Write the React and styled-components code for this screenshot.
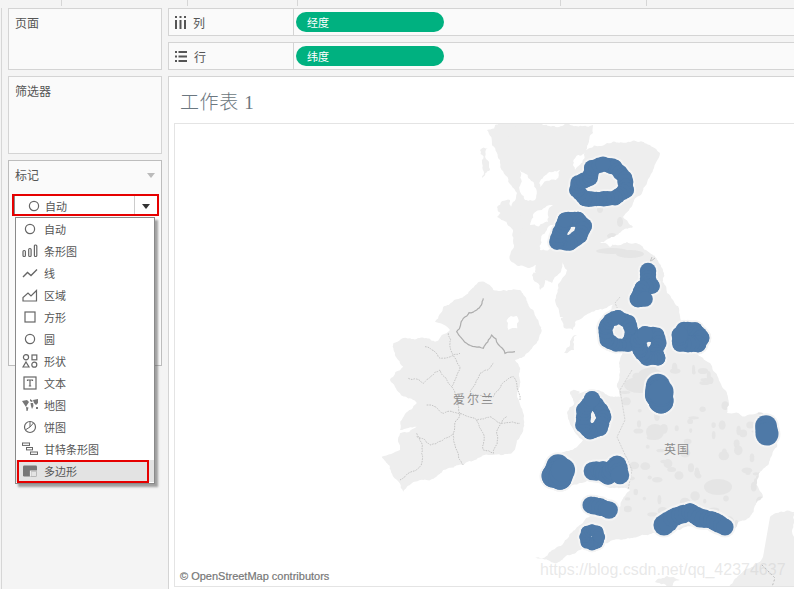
import React from 'react';
import styled, { createGlobalStyle } from 'styled-components';

const Global = createGlobalStyle`
  html, body { margin: 0; padding: 0; background: #f4f4f4; overflow: hidden; }
  body { font-family: "Noto Sans CJK SC", "Liberation Sans", sans-serif; color: #555; }
`;
const Page = styled.div`
  position: relative; width: 794px; height: 589px; overflow: hidden;
  display: flex; flex-direction: column;
`;
const TopStrip = styled.div`display: flex; height: 6px; flex: none;`;
const Tick = styled.div`
  flex: none; width: ${p => p.$w}px; box-sizing: border-box; border-right: 1px solid #d6d6d6;
`;
const Body = styled.div`display: flex; flex: 1; min-height: 0; padding-top: 2px;`;
const EdgeStrip = styled.div`
  flex: none; width: 2px; margin-right: 6px; box-sizing: border-box; border-right: 1px solid #d6d6d6;
`;
const Sidebar = styled.div`
  position: relative; flex: none; width: 154px; display: flex; flex-direction: column; gap: 6px;
`;
const Panel = styled.section`
  box-sizing: border-box; height: ${p => p.$h}px; background: #fafafa;
  border: 1px solid ${p => p.$active ? '#bdbdbd' : '#d4d4d4'};
  position: relative;
`;
const PanelTitle = styled.div`
  height: 28px; display: flex; align-items: center; justify-content: space-between;
  padding: 0 6px; font-size: 12px; line-height: 1; color: #555;
`;
const Caret = styled.span`
  width: 0; height: 0; border-left: 4px solid transparent; border-right: 4px solid transparent;
  border-top: 5px solid ${p => p.$dark ? '#333' : '#bbb'};
`;
const RedSelect = styled.div`
  box-sizing: border-box; margin: 5px 2px 0 3px; height: 22px; border: 2px solid #e60000;
  background: #fff; display: flex;
`;
const SelectValue = styled.div`
  flex: 1; display: flex; align-items: center; gap: 3px; padding: 2px 0 0 11px;
  font-size: 11px; color: #555; border-left: 1px solid #888;
`;
const SelectArrow = styled.div`
  flex: none; width: 22px; padding-top: 2px; border-left: 1px solid #ccc; display: flex; align-items: center; justify-content: center;
`;
const Menu = styled.ul`
  position: absolute; left: 7px; top: 209px; width: 140px; margin: 0; padding: 0; list-style: none;
  box-sizing: border-box; height: 267px; background: #fff; border: 1px solid #8a8a8a;
  box-shadow: 3px 3px 2px rgba(90,90,90,.55); z-index: 3;
`;
const MenuRow = styled.li`
  position: relative; height: 22px; display: flex; align-items: center; font-size: 11px; color: #555;
  background: ${p => p.$on ? '#e3e3e3' : 'transparent'};
  &::after {
    content: ${p => p.$on ? '""' : 'none'};
    position: absolute; left: 1px; right: 5px; top: 0; bottom: -1px; border: 2px solid #e60000;
  }
`;
const MenuIcon = styled.span`flex: none; width: 28px; display: flex; justify-content: center;`;
const Main = styled.div`
  flex: 1; min-width: 0; margin-left: 6px; display: flex; flex-direction: column; gap: 6px;
`;
const Shelf = styled.div`
  box-sizing: border-box; height: 28px; flex: none; display: flex; align-items: center; background: #fafafa;
  border-top: 1px solid #d4d4d4; border-bottom: 1px solid #d4d4d4; border-left: 1px solid #d4d4d4;
`;
const ShelfLabel = styled.div`
  box-sizing: border-box; flex: none; width: 125px; height: 100%; padding-left: 6px; display: flex;
  align-items: center; gap: 7px; border-right: 1px solid #d4d4d4; font-size: 12px; color: #555;
`;
const Pill = styled.div`
  margin-left: 2px; width: 148px; height: 20px; box-sizing: border-box; padding-left: 11px; border-radius: 10px;
  background: #00b180; color: #fff; font-size: 11px; display: flex; align-items: center;
`;
const Sheet = styled.div`
  flex: 1; min-height: 0; background: #fff; border-top: 1px solid #d4d4d4; border-left: 1px solid #d4d4d4;
  display: flex; flex-direction: column;
`;
const SheetTitle = styled.h1`
  flex: none; height: 46px; box-sizing: border-box; margin: 0; padding: 4px 0 0 11px; display: flex; align-items: center;
  font: 300 19px/1 "Liberation Serif", "Noto Sans CJK SC", serif; color: #6b7780; letter-spacing: .6px;
`;
const MapFrame = styled.div`
  position: relative; flex: 1; min-height: 0; margin: 0 0 2px 5px; overflow: hidden; background: #fff;
  border-top: 1px solid #e4e4e4; border-left: 1px solid #e4e4e4; border-bottom: 1px solid #e4e4e4;
`;
const MapSvg = styled.svg`display: block;`;
const Credit = styled.div`
  position: absolute; left: 5px; bottom: 3px; font: 11px/13px "Liberation Sans", sans-serif;
  color: #777; -webkit-text-stroke: .2px #777;
`;
const Watermark = styled.div`
  position: absolute; left: 365px; bottom: 6px; font: 16px/20px "Liberation Sans", sans-serif;
  color: rgba(205,205,205,.45); white-space: nowrap;
`;

const S = { fill: 'none', stroke: '#666', strokeWidth: 1.2 };
const Ic = ({ children, w = 16, h = 14 }) => <svg width={w} height={h} viewBox="0 0 16 14">{children}</svg>;
const icons = {
  circle: <Ic><circle cx="8" cy="7" r="4.6" {...S} /></Ic>,
  bars: <Ic><rect x="1" y="6.5" width="2.4" height="6" rx="1" {...S} /><rect x="6.7" y="4.5" width="2.4" height="8" rx="1" {...S} /><rect x="12.4" y="1" width="2.4" height="11.5" rx="1" {...S} /></Ic>,
  line: <Ic><path d="M1 11 L5.5 6.5 L9 9.5 L15 3.5" {...S} strokeWidth="1.4" /></Ic>,
  area: <Ic><path d="M1 13 V9.5 L6 5 L9 8 L14.5 2.5 V13 Z" {...S} /></Ic>,
  square: <Ic><rect x="3" y="2" width="10" height="10" {...S} /></Ic>,
  shape: <Ic><circle cx="4" cy="3.3" r="2.6" {...S} /><rect x="10" y="1" width="4.8" height="4.8" {...S} /><path d="M4 8 L7 13 H1 Z" {...S} /><circle cx="12.3" cy="10.7" r="2.5" {...S} /></Ic>,
  text: <Ic><rect x="2" y="1" width="12" height="12" {...S} /><path d="M5.5 5 V4 H10.5 V5 M8 4 V10 M6.8 10 H9.2" {...S} /></Ic>,
  map: <Ic w={20}><g fill="#777"><path d="M0 3 L5 2 L7 4 L5 7 L4 9 L2 6 Z" /><path d="M4 9 L6.5 9.5 L5.5 13 L4.5 13 Z" /><path d="M8 1 L11 3 L9.5 4 L8 3 Z" /><path d="M8.5 5 L11 5 L11.5 8 L10 11 L9 8 Z" /><path d="M11 2 L16 1 L16 5 L14 7 L12 5 Z" /><path d="M14 9 L16 9 L16 11 L14 11 Z" /></g></Ic>,
  pie: <Ic><circle cx="8" cy="7" r="5.5" {...S} /><path d="M8 7 V1.5 M8 7 L3.5 9.8 M8 7 L11.5 3" {...S} strokeWidth="1" /></Ic>,
  gantt: <Ic><rect x="0.5" y="1" width="7" height="2.4" {...S} strokeWidth="1" /><rect x="4.5" y="5.5" width="6" height="2.4" {...S} strokeWidth="1" /><rect x="8.5" y="10" width="7" height="2.4" {...S} strokeWidth="1" /></Ic>,
  polygon: <Ic w={18}><rect x="1" y="1.5" width="14" height="11" rx="1.2" fill="#777" /><path d="M8.5 12.5 V7 H15" fill="none" stroke="#eee" strokeWidth="1.2" /><rect x="9.2" y="7.6" width="5.4" height="4.6" fill="#e3e3e3" /></Ic>,
};
const items = [
  ['circle', '自动'], ['bars', '条形图'], ['line', '线'], ['area', '区域'], ['square', '方形'], ['circle', '圆'],
  ['shape', '形状'], ['text', '文本'], ['map', '地图'], ['pie', '饼图'], ['gantt', '甘特条形图'], ['polygon', '多边形'],
];

/* seeded random + fractal coastline generator for the map drawing */
const rng = seed => { let s = seed; return () => { s = (s * 16807) % 2147483647; return (s - 1) / 2147483646; }; };
const pts = str => { const n = str.match(/-?[\d.]+/g).map(Number); const o = []; for (let i = 0; i < n.length; i += 2) o.push([n[i], n[i + 1]]); return o; };
const z5 = a => a.map(([x, y]) => [380 + x / 3, 280 + y / 3]);
const rough = (arr, seed, closed = true, k = 0.2, min = 2.5) => {
  const r = rng(seed);
  const seg = (a, b) => {
    const dx = b[0] - a[0], dy = b[1] - a[1], l = Math.hypot(dx, dy);
    if (l < min) return [b];
    const d = (r() - 0.5) * l * k * 2;
    const m = [(a[0] + b[0]) / 2 - dy / l * d, (a[1] + b[1]) / 2 + dx / l * d];
    return [...seg(a, m), ...seg(m, b)];
  };
  const out = [arr[0]];
  const list = closed ? [...arr, arr[0]] : arr;
  for (let i = 1; i < list.length; i++) out.push(...seg(list[i - 1], list[i]));
  return 'M' + out.map(p => p[0].toFixed(1) + ' ' + p[1].toFixed(1)).join('L') + (closed ? 'Z' : '');
};

const GB = rough(pts('500 125 543 125 593 125 593 133 583 153 607 143 650 145 660 153 653 170 647 183 633 203 623 217 633 227 613 237 600 243 627 242 650 253 663 270 667 293 673 300 680 330 710 363 727 393 727 413 763 413 777 423 777 447 770 460 757 480 763 497 750 517 730 533 680 530 637 537 613 540 580 550 557 563 535 558 557 547 577 527 593 513 620 507 630 490 607 487 580 483 557 490 543 477 557 457 577 447 583 440 567 413 577 393 597 390 620 397 617 387 620 360 622 345 600 330 613 303 620 297 590 313 575 322 560 317 555 300 567 270 562 262 552 283 535 272 545 255 528 268 510 260 513 230 497 217 517 193 500 160 487 130'), 11, true, 0.14);
const IE = rough(z5(pts('300 5 340 30 420 30 460 90 485 150 470 190 440 220 405 240 420 300 430 400 420 470 395 520 330 525 250 555 190 570 130 600 70 635 40 590 5 530 60 510 60 460 110 440 60 450 110 370 60 340 30 300 70 260 40 190 90 175 165 185 210 150 165 125 190 80 250 50')), 23, true, 0.14);
const FR = rough(pts('770 517 794 512 794 590 723 590 745 570 763 557'), 31, false, 0.12);
const isles = [
  '480 150 488 148 490 170 482 178', '495 125 515 125 502 140 492 135', '512 222 520 215 522 232 514 238',
  '497 207 510 200 514 210 504 216', '532 275 548 265 550 275 540 290', '561 318 575 322 573 330 564 328',
  '570 345 577 335 574 350 564 353', '570 392 580 392 575 405', '655 582 680 580 670 590',
].map((s, i) => rough(pts(s), 41 + i, true, 0.2));
const inlets = [
  '540 187 560 170 556 180', '573 165 585 152 575 170', '520 170 535 200 525 200', '530 225 553 205 548 222',
  '540 250 555 225 552 248', '603 243 622 241 610 247',
].map((s, i) => rough(pts(s), 61 + i, true, 0.2));
const lake = rough(z5(pts('380 120 410 108 412 145 385 150')), 71, true, 0.2);

const patchRand = rng(97);
const patches = [];
for (let i = 0; i < 110; i++) {
  patches.push([620 + patchRand() * 155, 365 + patchRand() * 170, 1.5 + patchRand() * 4, 1.5 + patchRand() * 3.5]);
}
[[640, 385, 16, 8], [650, 375, 12, 7], [655, 432, 9, 8], [718, 487, 14, 8], [706, 352, 5, 4], [612, 251, 16, 3], [630, 254, 14, 4], [620, 222, 3, 5], [612, 236, 5, 3], [600, 209, 3, 4], [648, 224, 3, 3]].forEach(p => patches.push(p));

const borders = [
  ['310 55 290 90 250 115 230 155 260 190 310 205 335 165 375 220 405 215', 3.6, '#adadad', 'none'],
  ['205 160 210 200 240 260 215 320 240 400 220 460 230 510 250 555', 3, '#c4c4c4', '5 3'],
  ['85 295 130 310 180 270 215 320', 3, '#c4c4c4', '5 3'],
  ['140 375 190 400 240 400 290 420 330 410 420 430', 3, '#c4c4c4', '5 3'],
  ['135 200 180 235 240 220', 3, '#c4c4c4', '5 3'],
  ['340 250 300 280 270 340 340 350 400 290 420 360', 3, '#c4c4c4', '5 3'],
  ['110 460 125 520 120 560 60 600', 3, '#c4c4c4', '5 3'],
  ['110 470 150 495 220 460', 3, '#c4c4c4', '5 3'],
  ['290 420 310 510 340 520 380 410', 3, '#c4c4c4', '5 3'],
].map(([s, w, c, d], i) => ({ d: rough(pts(s), 81 + i, false, 0.12, 10), w, c, dash: d }));

const blobDefs = [
  { p: '603 164 615 167 625 178 626 190 615 198 600 199 585 199 577 190 578 183 590 178 592 168', r: 7.5, closed: true },
  { p: '565 220 578 219 584 226 580 236 570 243 557 242 560 232 563 226', r: 7.5, closed: true },
  { p: '648 271 648 282 652 286 642 288 638 299 645 299', r: 8 },
  { p: '618 317 629 322 632 333 628 345 616 345 607 340 605 328 610 320', r: 7, closed: true },
  { p: '645 334 657 335 659 343 655 352 658 358 647 358 640 350 638 340', r: 7.5, closed: true },
  { p: '680 335 684 330 695 330 701 338 698 344 688 344 680 344', r: 8, closed: true },
  { p: '658 386 657 395 661 401 661 392', r: 12 },
  { p: '592 399 601 410 604 417 600 428 590 432 583 425 584 410', r: 7.5, closed: true },
  { p: '558 466 553 476 560 478 563 470', r: 11.5 },
  { p: '593 471 603 471 608 475 617 465 620 475', r: 9.5 },
  { p: '591 505 600 507 609 510', r: 8.5 },
  { p: '599 537 597 542 592 544 587 542 585 537 587 532 592 530 597 532', r: 6, closed: true },
  { p: '664 525 668 522', r: 10.5 },
  { p: '672 518 680 515 690 512 700 518 712 520 725 527', r: 9 },
  { p: '766 426 767 434', r: 11 },
];
const blobRand = rng(1234);
const circles = [];
blobDefs.forEach(b => {
  const a = pts(b.p);
  const list = b.closed ? [...a, a[0]] : a;
  for (let i = 1; i < list.length; i++) {
    const [x0, y0] = list[i - 1], [x1, y1] = list[i];
    const n = Math.max(1, Math.round(Math.hypot(x1 - x0, y1 - y0) / 3.5));
    for (let j = 0; j <= n; j++) {
      circles.push([x0 + (x1 - x0) * j / n, y0 + (y1 - y0) * j / n, b.r - 0.6 + blobRand() * 1.2]);
    }
  }
});

const MapDrawing = () => (
  <MapSvg width="619" height="462" viewBox="175 124 619 462">
    <defs>
      <clipPath id="gb"><path d={GB} /></clipPath>
      <filter id="soft" x="0" y="0" width="100%" height="100%"><feGaussianBlur stdDeviation=".35" /></filter>
    </defs>
    <g filter="url(#soft)">
      <g fill="#eeeeee">
        <path d={GB} /><path d={IE} /><path d={FR} />
        {isles.map((d, i) => <path key={i} d={d} />)}
      </g>
      <g fill="#fff">
        {inlets.map((d, i) => <path key={i} d={d} />)}
        <path d={lake} />
      </g>
      <g fill="#e5e5e5" clipPath="url(#gb)">
        {patches.map(([x, y, a, b], i) => <ellipse key={i} cx={x} cy={y} rx={a} ry={b} />)}
      </g>
      <g fill="none" transform="translate(380 280) scale(.3333)">
        {borders.map((b, i) => <path key={i} d={b.d} stroke={b.c} strokeWidth={b.w} strokeDasharray={b.dash} />)}
      </g>
      <path d="M620 297 L615 303 L625 325 M632 370 L620 390 L625 420 L617 437 L632 470 L628 490" fill="none" stroke="#cfcfcf" strokeWidth=".9" strokeDasharray="2 1" />
      <path d="M762 565 L775 578 L772 587" fill="none" stroke="#bbb" strokeWidth="1" strokeDasharray="2 2" />
      <path d="M652 257 L650 262 L655 258" fill="none" stroke="#c4c4c4" strokeWidth="1" />
    </g>
    <g fill="#f4f4f4">
      {circles.map(([x, y, r], i) => <circle key={i} cx={x} cy={y} r={r + 2} />)}
    </g>
    <g fill="#4e79a7">
      {circles.map(([x, y, r], i) => <circle key={i} cx={x} cy={y} r={r} />)}
    </g>
    <text x="474" y="404" textAnchor="middle" fontSize="12" letterSpacing="2" fill="#8b8b8b" fontFamily="'Noto Sans CJK SC',sans-serif">爱尔兰</text>
    <text x="677" y="454" textAnchor="middle" fontSize="12" letterSpacing="1" fill="#8b8b8b" fontFamily="'Noto Sans CJK SC',sans-serif">英国</text>
  </MapSvg>
);

const ColIcon = () => <svg width="11" height="13" viewBox="0 0 11 13"><g fill="#555"><rect x="0" y="4" width="2" height="9" /><rect x="4.5" y="4" width="2" height="9" /><rect x="9" y="4" width="2" height="9" /><rect x="0" y="0" width="2" height="2" /><rect x="4.5" y="0" width="2" height="2" /><rect x="9" y="0" width="2" height="2" /></g></svg>;
const RowIcon = () => <svg width="12" height="11" viewBox="0 0 12 11"><g fill="#555"><rect x="0" y="0" width="2" height="2" /><rect x="0" y="4.5" width="2" height="2" /><rect x="0" y="9" width="2" height="2" /><rect x="3.5" y="0" width="8.5" height="2" /><rect x="3.5" y="4.5" width="8.5" height="2" /><rect x="3.5" y="9" width="8.5" height="2" /></g></svg>;

export default function App() {
  return (
    <Page>
      <Global />
      <TopStrip>
        <Tick $w={62} /><Tick $w={126} /><Tick $w={110} /><Tick $w={263} /><Tick $w={86} />
      </TopStrip>
      <Body>
        <EdgeStrip />
        <Sidebar>
          <Panel $h={62}><PanelTitle>页面</PanelTitle></Panel>
          <Panel $h={78}><PanelTitle>筛选器</PanelTitle></Panel>
          <Panel $h={206} $active>
            <PanelTitle>标记<Caret /></PanelTitle>
            <RedSelect>
              <SelectValue>{icons.circle}自动</SelectValue>
              <SelectArrow><Caret $dark /></SelectArrow>
            </RedSelect>
          </Panel>
          <Menu>
            {items.map(([ic, label], i) => (
              <MenuRow key={i} $on={i === items.length - 1}><MenuIcon>{icons[ic]}</MenuIcon>{label}</MenuRow>
            ))}
          </Menu>
        </Sidebar>
        <Main>
          <Shelf>
            <ShelfLabel><ColIcon />列</ShelfLabel>
            <Pill>经度</Pill>
          </Shelf>
          <Shelf>
            <ShelfLabel><RowIcon />行</ShelfLabel>
            <Pill>纬度</Pill>
          </Shelf>
          <Sheet>
            <SheetTitle>工作表 1</SheetTitle>
            <MapFrame>
              <MapDrawing />
              <Credit>© OpenStreetMap contributors</Credit>
              <Watermark>https://blog.csdn.net/qq_42374637</Watermark>
            </MapFrame>
          </Sheet>
        </Main>
      </Body>
    </Page>
  );
}
